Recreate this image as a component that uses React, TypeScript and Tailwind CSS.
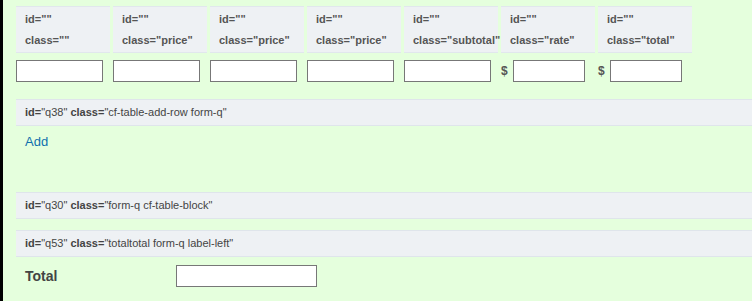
import React from "react";

const cols = [
  { cls: '""', dollar: false },
  { cls: '"price"', dollar: false },
  { cls: '"price"', dollar: false },
  { cls: '"price"', dollar: false },
  { cls: '"subtotal"', dollar: false },
  { cls: '"rate"', dollar: true },
  { cls: '"total"', dollar: true },
];

function Bar({ id, cls }: { id: string; cls: string }) {
  return (
    <div className="h-[27px] bg-[#eef1f4] border-y border-[#dfe5eb] pl-[9px] text-[11px] leading-[25px] text-[#444] whitespace-nowrap">
      <span className="font-bold">id=</span>"{id}" <span className="font-bold">class=</span>"{cls}"
    </div>
  );
}

export default function App() {
  return (
    <div
      className="min-h-[301px] bg-[#e5ffdd] border-l-[3px] border-black pl-[13px] pt-[6px]"
      style={{ fontFamily: '"Liberation Sans", Arial, sans-serif' }}
    >
      <div className="flex gap-[3px]">
        {cols.map((c, i) => (
          <div
            key={i}
            className="w-[94px] h-[47px] bg-[#eef1f4] border-y border-[#e1e7ed] pl-[9px] pt-[2px] text-[11px] font-bold leading-[21px] text-[#555] whitespace-nowrap"
          >
            <div>id=""</div>
            <div>class={c.cls}</div>
          </div>
        ))}
      </div>
      <div className="flex gap-[3px] mt-[7px]">
        {cols.map((c, i) => (
          <div key={i} className="w-[94px] flex items-center">
            {c.dollar ? (
              <>
                <span className="text-[12px] font-bold text-[#555] w-[12px]">$</span>
                <input className="w-[72px] h-[22px] bg-white border border-[#777] outline-none" />
              </>
            ) : (
              <input className="w-[87px] h-[22px] bg-white border border-[#777] outline-none" />
            )}
          </div>
        ))}
      </div>
      <div className="mt-[17px]">
        <Bar id="q38" cls="cf-table-add-row form-q" />
      </div>
      <div className="h-[66px] pl-[9px] pt-[3px]">
        <a className="text-[13px] leading-[16px] text-[#0f6fae] cursor-pointer">Add</a>
      </div>
      <Bar id="q30" cls="form-q cf-table-block" />
      <div className="mt-[11px]">
        <Bar id="q53" cls="totaltotal form-q label-left" />
      </div>
      <div className="flex items-center mt-[8px]">
        <div className="w-[160px] pl-[9px] text-[14px] font-bold text-[#444]">Total</div>
        <input className="w-[141px] h-[22px] bg-white border border-[#777] outline-none" />
      </div>
    </div>
  );
}
